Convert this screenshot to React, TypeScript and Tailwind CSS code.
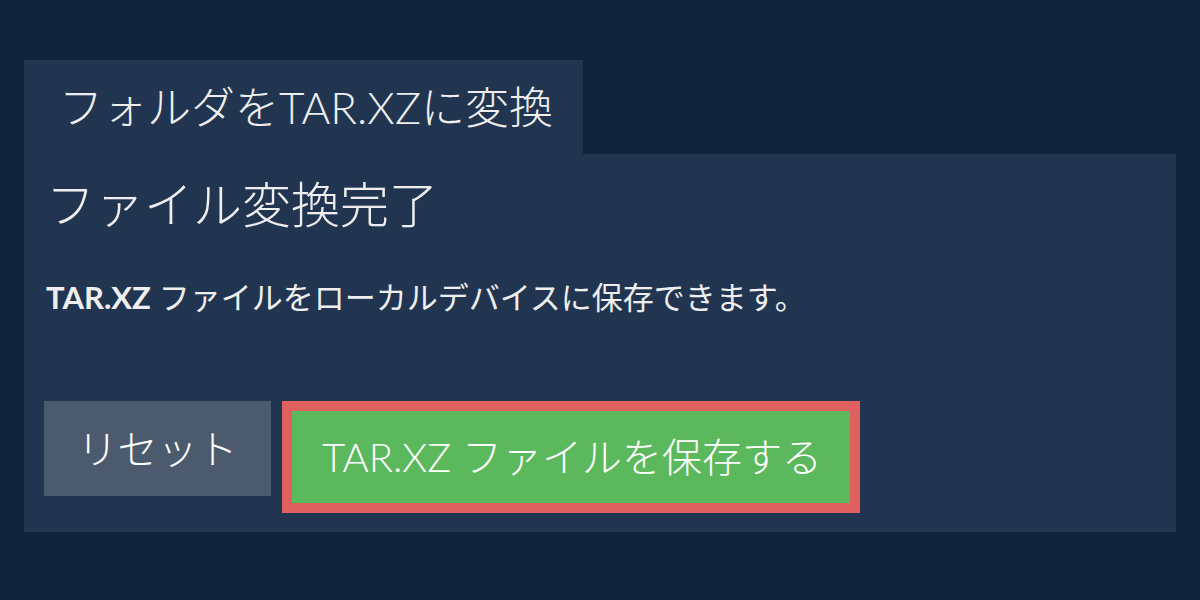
import React from "react";

const font = { fontFamily: "Lato, 'Noto Sans CJK JP', sans-serif" };

export default function App() {
  return (
    <div className="w-[1200px] h-[600px] bg-[#10233a] pt-[60px] px-[24px]" style={font}>
      <div className="w-[559px] h-[94px] bg-[#213550] flex items-center pl-[35px]">
        <span className="text-[44px] leading-none font-light text-[#eeeeee]">フォルダをTAR.XZに変換</span>
      </div>
      <div className="bg-[#213550] h-[378px] px-[20px] pt-[22px] flex flex-col">
        <div className="h-[56px] flex items-center pl-[2px]">
          <span className="text-[49px] leading-none font-light text-[#eeeeee]">ファイル変換完了</span>
        </div>
        <div className="mt-[47px] h-[36px] flex items-center pl-[2px]">
          <span className="text-[31px] leading-none text-[#eeeeee]">
            <b className="font-bold">TAR.XZ</b> ファイルをローカルデバイスに保存できます。
          </span>
        </div>
        <div className="mt-[86px] flex items-start gap-[11px]">
          <div className="w-[227px] h-[95px] bg-[#4b5b6d] flex items-center justify-center">
            <span className="text-[40px] leading-none font-light text-white">リセット</span>
          </div>
          <div className="w-[578px] h-[112px] border-[10px] border-[#df605e] bg-[#5cb85c] flex items-center justify-center pl-[2px]">
            <span className="text-[40px] leading-none font-light text-white">TAR.XZ ファイルを保存する</span>
          </div>
        </div>
      </div>
    </div>
  );
}
